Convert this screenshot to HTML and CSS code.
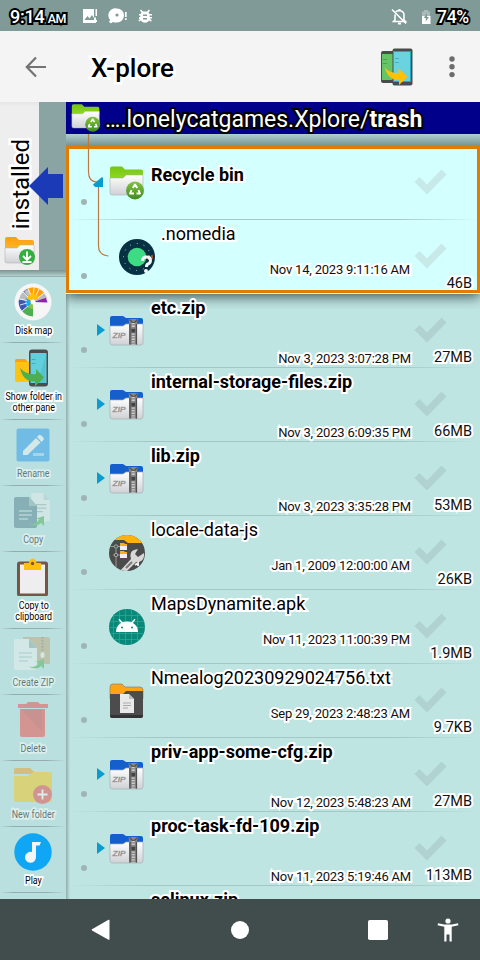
FILE: index.html
```html
<!DOCTYPE html>
<html lang="en">
<head>
<meta charset="utf-8">
<title>X-plore</title>
<link rel="stylesheet" href="styles.css">
</head>
<body>
<svg width="0" height="0" class="defs">
  <defs>
    <linearGradient id="silver" x1="0" y1="0" x2="0" y2="1"><stop offset="0" stop-color="#fff"/><stop offset="1" stop-color="#cfd1d5"/></linearGradient>
    <linearGradient id="lime" x1="0" y1="0" x2="0" y2="1"><stop offset="0" stop-color="#76c410"/><stop offset="1" stop-color="#8fdc28"/></linearGradient>
    <linearGradient id="amber" x1="0" y1="0" x2="0" y2="1"><stop offset="0" stop-color="#ff9d0a"/><stop offset="1" stop-color="#ffb92e"/></linearGradient>
    <linearGradient id="ball" x1="0" y1="0" x2="0" y2="1"><stop offset="0" stop-color="#83c340"/><stop offset="1" stop-color="#3f8a22"/></linearGradient>
    <clipPath id="disc"><circle cx="18" cy="18" r="18"/></clipPath>
  </defs>
  <symbol id="check" viewBox="0 0 33 26"><path d="M.5 13 5.500 8l7.500 7.500L27.500.5l5 5L13 25.500z"/></symbol>
  <symbol id="recycle" viewBox="0 0 36 36">
    <path d="M1 3.500q0-2 2-2h10l3 3h16q2 0 2 2v8H1z" fill="url(#lime)"/>
    <path d="M1 13h13l3-3h17v18q0 2-2 2H3q-2 0-2-2z" fill="url(#silver)" stroke="#9ba5a5" stroke-width=".5"/>
    <circle cx="26" cy="25.500" r="9" fill="url(#ball)"/>
    <path d="m23.800 23 2.200-3.500 2.300 3.500M29.500 25l1.500 3.500h-3.500M25 28.500h-4l1.500-3.500" fill="none" stroke="#fff" stroke-width="1.900" stroke-linejoin="round"/>
  </symbol>
  <symbol id="download" viewBox="0 0 32 32">
    <path d="M1 4q0-2 2-2h9l3 3h13q2 0 2 2v8H1z" fill="url(#amber)"/>
    <path d="M1 13h12l3-3h14v16q0 2-2 2H3q-2 0-2-2z" fill="url(#silver)" stroke="#aaa" stroke-width=".5"/>
    <circle cx="23" cy="22" r="8" fill="#36ae3e"/>
    <path d="M23 16.500v8m-4-3.500 4 4 4-4M18.500 27h9" fill="none" stroke="#fff" stroke-width="1.800"/>
  </symbol>
  <symbol id="zip" viewBox="0 0 36 36">
    <path d="M1 5q0-2 2-2h11l3 2h15q2 0 2 2v10H1z" fill="#145fcb"/>
    <path d="M1 13h13l3-2h17v18q0 3-2 3H3q-2 0-2-3z" fill="url(#silver)" stroke="#a5b0b5" stroke-width=".7"/>
    <path d="M19.500 6h10L28 9v22.500h-8V9z" fill="#868686"/>
    <path d="M20.500 6.500l4 4 4-4M21 11v20.500M27.500 11v20.500" stroke="#505050" fill="none" stroke-width="1.200"/>
    <path d="M24.300 10v21.500" stroke="#ccc" stroke-width="3" stroke-dasharray="1.300 1.300"/>
    <path d="M22.300 15.500h4v4h-4z" fill="#444"/>
    <text x="3.500" y="25" font-size="7.500" font-style="italic" textLength="13" lengthAdjust="spacingAndGlyphs" fill="#808080" stroke="#999" stroke-width=".3">ZIP</text>
  </symbol>
  <symbol id="phone" viewBox="0 0 20 38">
    <rect x=".5" y=".5" width="19" height="37" rx="3" fill="#4a4e50"/><path d="M2 4h16v30H2z" fill="#62d0dc"/><path d="M17 7v27H9z" fill="#54c3d0"/><path d="M4 10v1m2-1v1m-2 3v1m2-1v1" stroke="#429fae" stroke-width="1.500"/>
  </symbol>
  <symbol id="docs" viewBox="0 0 38 36">
    <path d="M17 2q0-2 2-2h12l7 8v22q0 2-2 2H19q-2 0-2-2z" fill="#e8eeee"/><path d="M31 0v8h7z" fill="#b7cccb"/>
    <path d="M22 13h12m-12 4h12m-12 4h8" stroke="#9caead" stroke-width="1.400"/>
  </symbol>
  <symbol id="sheet" viewBox="0 0 24 32">
    <path d="M0 2q0-2 2-2h13l8 9v20q0 2-2 2H2q-2 0-2-2z"/><path d="M15 0v9h8z" fill="#8ea9ae"/>
    <path d="M5 14h13M5 18h13M5 22h9" stroke="#b5c9cc" stroke-width="1.400"/>
  </symbol>
</svg>

<header class="status">
  <span class="clock">9:14<small>AM</small></span>
  <svg class="notes" width="72" height="16" viewBox="0 0 72 16" fill="#fff">
    <path d="M1 1h11v8.500h2V15H1z"/><path d="m2.500 12 3-4 2 2.500L10 7l2 3v2z" fill="#809a98"/><path d="M13.500 1h1.500v7h-1.500zM13 12h2v2h-2z"/>
    <path d="M35 .5a7 7 0 0 1 0 14c-2 0-3 0-4-.6A7 7 0 0 1 35 .5z"/><circle cx="35" cy="7" r="1.600" fill="#809a98"/><circle cx="29" cy="13.500" r="1.700"/><path d="M43 4h1.700v5H43zm0 6.200h1.700V12H43z"/>
    <path d="M59.500 4.500 58 2.500 59 1.500l2 2h4l2-2 1 1-1.500 2 1 1.500H70v1.500h-2.300V9H70v1.500h-2.300L70 13l-1.500.5-1.500-1q-1.300 2.300-4 2.300t-4-2.300l-2 1-.5-1.500 2-1H57V9h1.300V7.500H57V6h1.500z"/><path d="M61 6.500h4V8h-4zm0 3.500h4v1.500h-4z" fill="#809a98"/>
  </svg>
  <svg class="bell" width="18" height="18" viewBox="0 0 18 18" fill="none" stroke="#fff" stroke-width="1.600"><path d="M5 6.500V12L3.500 13.500h12L14 12V7q0-3.500-3.500-4.300H8Q6.500 3 6 4M2 1.500l14 14"/><path d="M8 15.500h3M9.500 1v2" stroke-width="2.200"/></svg>
  <svg class="battery" width="10" height="16" viewBox="0 0 10 16"><path d="M3 1h4v1.500h2V7H1V2.500h2z" fill="#a9bab8"/><path d="M1 7h8.500v8H1z" fill="#fff"/><path d="M6 4 2.800 9h2v3.500L8 8H6z" fill="#809a98"/></svg>
  <span class="percent">74%</span>
</header>

<div class="toolbar">
  <svg class="back" width="22" height="22" viewBox="0 0 22 22" fill="none" stroke="#737373" stroke-width="2.200"><path d="M21 11H2.500M11 1.500 1.800 11l9.200 9.500"/></svg>
  <h1>X-plore</h1>
  <svg class="panes" width="34" height="38" viewBox="0 0 34 38">
    <rect x="1" y="3" width="20" height="32" rx="2" fill="#484c4c"/><path d="M2 6h14v26H2z" fill="#65c466"/><path d="M4 11v1m2-1v1m-2 3v1m2-1v1" stroke="#439247" stroke-width="1.400"/>
    <rect x="12.500" y=".5" width="20" height="37" rx="2" fill="#484c50"/><path d="M13.500 3.500h17v30h-17z" fill="#6bd3df" stroke="#22a5c1"/><path d="M16 10v1m2-1v1m-2 3v1m2-1v1" stroke="#439fae" stroke-width="1.400"/>
    <path d="M4.500 19q4 6 14 6v-4.500l9 8-8.500 8.500v-5Q8 32 4.500 19z" fill="#ffc107"/>
  </svg>
  <svg class="more" width="6" height="22" viewBox="0 0 6 22" fill="#6c6c6c"><circle cx="3" cy="3" r="2.700"/><circle cx="3" cy="10.800" r="2.700"/><circle cx="3" cy="18.600" r="2.700"/></svg>
</div>

<div class="content">
  <aside class="side">
    <div class="pane-tab">
      <div class="tab"><span class="vertical">installed</span><svg width="32" height="32"><use href="#download"/></svg></div>
      <svg class="arrow" width="35" height="38" viewBox="0 0 35 38"><path d="M0 19 19 0v7h15v24H19v7z" fill="#1b3ab8"/></svg>
    </div>
    <div class="side-shade"></div>
    <div class="tool">
      <svg width="38" height="38" viewBox="0 0 38 38"><circle cx="19" cy="19" r="18.500" fill="#f6f6f6"/>
        <path d="M19 19v14.500A14.500 14.500 0 0 1 8 28z" fill="#4caf50"/>
        <path d="M19 19 8 28a14 14 0 0 1-3-12z" fill="#3e55b5"/>
        <path d="M19 19 5 16a14 14 0 0 1 4-7z" fill="#b9bdc0"/>
        <path d="M19 19 9 9a14 14 0 0 1 5-3.500z" fill="#3e55b5"/>
        <path d="M19 19 10 9a14 14 0 0 1 9-4.500z" fill="#c0c0c0"/>
        <path d="M19 19 14 5.500A14 14 0 0 1 25 5.800z" fill="#ffa000"/>
        <path d="m19 19 6-13.200a14 14 0 0 1 5 4z" fill="#ff9d13"/>
        <path d="m19 19 11-9.200 3 5z" fill="#b9bdc0"/>
        <path d="m19 19 13-4.200 1.500 4.700z" fill="#8e24aa"/>
        <path d="M19 19v7a7 7 0 0 1-6-3z" fill="#8bc34a"/>
        <path d="m19 19-6 5a8 8 0 0 1-1-9z" fill="#22a7f0"/>
        <path d="m19 19-7-4 4-4.500L18 10l7 3z" fill="#ffc107"/>
        <path d="M5 16l8 1.500M6 22l7-2M8 28l6-5M9 9l5 5m0-8.500 2.500 6M20 4.500l-.5 6M25 6l-2.500 5.500M30 10l-6 5" stroke="#fff" stroke-width=".8"/><circle cx="19" cy="19" r="2.500" fill="#fff"/>
      </svg><span>Disk map</span></div>
    <div class="tool tall">
      <svg width="38" height="38" viewBox="0 0 38 38"><path d="M1 12q0-2 2-2h8l3 3h4v20H3q-2 0-2-2z" fill="#ffc20e"/><path d="M1 12q0-2 2-2h8l3 3H1z" fill="#f9a014"/><use href="#phone" x="14.500" y="0" width="20" height="38"/><path d="M6 19q6 7 16 6v-5l8 8.500-9 9v-5Q9 33 6 19z" fill="#4caf50"/></svg>
      <span>Show folder in<br>other pane</span></div>
    <div class="tool off">
      <svg width="38" height="38" viewBox="0 0 38 38"><rect x="2.500" y="2.500" width="33" height="33" rx="2" fill="#2597ec"/><path d="m9 25 13-13 4.500 4.500L13.500 29H9zM23 11l2-2q1-.7 2 .3l2.500 2.500q1 1 0 2L27.500 16z" fill="#f1f1f1"/><path d="M19 28.500h11" stroke="#8fcaf7" stroke-width="3"/></svg><span>Rename</span></div>
    <div class="tool off">
      <svg width="38" height="38" viewBox="0 0 38 38"><use href="#docs" x="0" y="1" width="38" height="32"/><use href="#sheet" x="0" y="5" width="24" height="32" fill="#4f7c8b"/><path d="M14 31q8 3 11-4h-4l9-3v10l-3-3q-5 5-13 0z" fill="#4caf50"/></svg><span>Copy</span></div>
    <div class="tool tall">
      <svg width="38" height="38" viewBox="0 0 38 38"><rect x="4.500" y="5" width="28" height="32" rx="1" fill="#eee" stroke="#795548" stroke-width="3"/><path d="M10 5h5q0-4 4-4.500Q22 1 22.500 5H27v7H10z" fill="#ffc107"/><circle cx="18.500" cy="5.500" r="1.700" fill="#795548"/></svg><span>Copy to<br>clipboard</span></div>
    <div class="tool off">
      <svg width="38" height="38" viewBox="0 0 38 38"><path d="M9 2h24q3 0 3 3v24H9z" fill="#c0a274"/><path d="M28.500 2v17" stroke="#8b7860" stroke-width="2" stroke-dasharray="1.500 1.500"/><rect x="26.500" y="17" width="4" height="6" rx="2" fill="#eee"/><use href="#sheet" x="0" y="4" width="24" height="32" fill="#eef2f2"/><path d="M14 31q8 3 11-4h-4l9-3v10l-3-3q-5 5-13 0z" fill="#4caf50"/></svg><span>Create ZIP</span></div>
    <div class="tool off">
      <svg width="38" height="38" viewBox="0 0 38 38"><path d="M4 3h8l2-2h10l2 2h8v4H4zM6 8h25v26q0 2-2 2H8q-2 0-2-2z" fill="#f04540"/><path d="m8 9 20 22V9z" fill="#d83e3a"/></svg><span>Delete</span></div>
    <div class="tool off">
      <svg width="38" height="38" viewBox="0 0 38 38"><path d="M0 3q0-2 2-2h14l6 6H0z" fill="#e99c16"/><path d="M0 9h14l5-4h17q2 0 2 2v26q0 2-2 2H2q-2 0-2-2z" fill="#fbc312"/><circle cx="28.500" cy="27.500" r="9.500" fill="#ef4340"/><path d="M28.500 22.500v10m-5-5h10" stroke="#fff" stroke-width="1.800"/></svg><span>New folder</span></div>
    <div class="tool">
      <svg width="38" height="38" viewBox="0 0 38 38"><circle cx="19" cy="19" r="18.700" fill="#0fa7f5"/><path d="M18 9h9l-1.500 3.500H22V24a5.500 5.500 0 1 1-4-5z" fill="#f3f6f8"/></svg><span>Play</span></div>
  </aside>

  <main class="files">
    <div class="path"><svg width="30" height="30"><use href="#recycle"/></svg><span>….lonelycatgames.Xplore/<b>trash</b></span></div>
    <div class="path-shade"></div>
    <section class="selected">
      <div class="row lead"><i></i><svg class="icon" width="36" height="36"><use href="#recycle"/></svg><b class="name">Recycle bin</b><svg class="check"><use href="#check"/></svg></div>
      <div class="row child"><i></i><svg class="icon" width="36" height="36" viewBox="0 0 36 36"><circle cx="18" cy="18" r="18" fill="#073042"/><circle cx="18" cy="18" r="13.500" fill="none" stroke="#b4d2d8" stroke-width="1" stroke-dasharray="1 6"/><circle cx="18" cy="18" r="9.300" fill="#3ddc84"/><path d="M30 16v5m3-5v4" stroke="#e9572c" stroke-width="1.400"/><path d="M23.500 22q0-4 4-4t4 3.500q0 2.500-2.500 3.500-1.500.5-1.500 3" fill="none" stroke="#f5f5f5" stroke-width="3"/><circle cx="27" cy="32" r="2" fill="#f5f5f5"/></svg><span class="name">.nomedia</span><svg class="check"><use href="#check"/></svg><time class="high">Nov 14, 2023 9:11:16 AM</time><span class="size">46B</span></div>
    </section>
    <svg class="branches" width="45" height="130" viewBox="0 0 45 130" fill="none" stroke="#b97a45" stroke-width="1.200"><path d="M22.500 0v38q0 10 9 10M32.500 52v60q0 9 10 10"/><path d="m36 43-9 7.500 2 2.500h8V44z" fill="#0a9bd0" stroke="none"/></svg>
    <div class="row"><i></i><u></u><svg class="icon" width="36" height="36"><use href="#zip"/></svg><b class="name">etc.zip</b><svg class="check"><use href="#check"/></svg><time>Nov 3, 2023 3:07:28 PM</time><span class="size">27MB</span></div>
    <div class="row"><i></i><u></u><svg class="icon" width="36" height="36"><use href="#zip"/></svg><b class="name">internal-storage-files.zip</b><svg class="check"><use href="#check"/></svg><time>Nov 3, 2023 6:09:35 PM</time><span class="size">66MB</span></div>
    <div class="row"><i></i><u></u><svg class="icon" width="36" height="36"><use href="#zip"/></svg><b class="name">lib.zip</b><svg class="check"><use href="#check"/></svg><time>Nov 3, 2023 3:35:28 PM</time><span class="size">53MB</span></div>
    <div class="row"><i></i><svg class="icon" width="36" height="36" viewBox="0 0 36 36"><g clip-path="url(#disc)"><path d="M0 0h36v36H0z" fill="#4b4b4b"/><path d="M0 0h36v8H19l-4-3H0z" fill="#ffb20d"/><path d="M0 11.500h11M7 14v18M4 20h7" stroke="#999" fill="none"/><circle cx="7" cy="11.500" r="1.700" fill="#4b4b4b" stroke="#aaa"/><circle cx="7" cy="20" r="1.700" fill="#4b4b4b" stroke="#aaa"/><path d="M11 9h7v6h-7zm0 8h7v6h-7z" fill="#eee"/><path d="M11 8h4l1 1h2v2h-7zm0 8h4l1 1h2v2h-7z" fill="#ffad16"/><path d="m11 36 11-12q-2-7 3-9l4-1-3 5 3 3 6-4q1 7-5 9l-3 0-9 9z" fill="#d8d8d8"/><path d="m17 33 6-6" stroke="#777" stroke-width="2"/><path d="m26 30 3-2v3" stroke="#eee" stroke-width="2" fill="none"/></g></svg><span class="name">locale-data-js</span><svg class="check"><use href="#check"/></svg><time class="high">Jan 1, 2009 12:00:00 AM</time><span class="size">26KB</span></div>
    <div class="row"><i></i><svg class="icon" width="36" height="36" viewBox="0 0 36 36"><g clip-path="url(#disc)"><path d="M0 0h36v36H0z" fill="#07897a"/><path d="M4.500 0v36m6-36v36m6-36v36m6-36v36m6-36v36M0 6.500h36m-36 6h36m-36 6h36m-36 6h36m-36 6h36" stroke="#399f92" stroke-width=".8"/></g><path d="M7 23q0-6 5-9l-2.500-3.500 1-.8 3 3.600q4.500-1.600 9 0l3-3.600 1 .8L24 14q5 3 5 9z" fill="#fff"/><circle cx="13" cy="18.500" r="1" fill="#07897a"/><circle cx="23" cy="18.500" r="1" fill="#07897a"/></svg><span class="name">MapsDynamite.apk</span><svg class="check"><use href="#check"/></svg><time class="high">Nov 11, 2023 11:00:39 PM</time><span class="size">1.9MB</span></div>
    <div class="row"><i></i><svg class="icon" width="36" height="36" viewBox="0 0 36 36"><path d="M1 4q0-3 3-3h9l3 3h15q3 0 3 3v9H1z" fill="#ffa514" stroke="#7d7360" stroke-width=".6"/><path d="M1 11h13l3-3h17v24q0 3-3 3H4q-3 0-3-3z" fill="#4c4c4c"/><path d="M1 32h33v1q0 2-2 2H3q-2 0-2-2z" fill="#333"/><path d="M11 11h9l5 5v14H11z" fill="#e9e9e9"/><path d="M20 11v5h5z" fill="#bbb"/><path d="M14 20h8m-8 2.500h8M14 25h5" stroke="#aaa"/></svg><span class="name">Nmealog20230929024756.txt</span><svg class="check"><use href="#check"/></svg><time class="high">Sep 29, 2023 2:48:23 AM</time><span class="size">9.7KB</span></div>
    <div class="row"><i></i><u></u><svg class="icon" width="36" height="36"><use href="#zip"/></svg><b class="name">priv-app-some-cfg.zip</b><svg class="check"><use href="#check"/></svg><time>Nov 12, 2023 5:48:23 AM</time><span class="size">27MB</span></div>
    <div class="row"><i></i><u></u><svg class="icon" width="36" height="36"><use href="#zip"/></svg><b class="name">proc-task-fd-109.zip</b><svg class="check"><use href="#check"/></svg><time>Nov 11, 2023 5:19:46 AM</time><span class="size">113MB</span></div>
    <div class="row last"><b class="name">selinux.zip</b></div>
  </main>
</div>

<nav class="navbar">
  <svg width="20" height="22" viewBox="0 0 20 22"><path d="M1 10.300 17.500.8q1-.5 1 .7v18.500q0 1.200-1 .7L1 11.500q-.8-.6 0-1.200z" fill="#fff"/></svg>
  <svg width="18" height="18" viewBox="0 0 18 18"><circle cx="9" cy="9" r="9" fill="#fff"/></svg>
  <svg width="20" height="20" viewBox="0 0 20 20"><rect width="20" height="20" rx="1.800" fill="#fff"/></svg>
  <svg width="22" height="24" viewBox="0 0 22 24" fill="#fff"><circle cx="11" cy="3" r="2.600"/><path d="m1 5.300 6 1.200h8l6-1.200.4 2-6.700 1.500V23.500h-2.200v-7h-3v7H7.300V8.800L.6 7.300z"/></svg>
</nav>
</body>
</html>
```
FILE: styles.css
```css
* { box-sizing: border-box; }
body {
  margin: 0;
  width: 480px;
  height: 960px;
  overflow: hidden;
  display: flex;
  flex-direction: column;
  font-family: Roboto, "Liberation Sans", sans-serif;
  color: #000;
  background: #bfe5e3;
}
svg { display: block; flex: none; }
.defs { position: absolute; }

.status {
  height: 31px;
  flex: none;
  display: flex;
  align-items: center;
  padding: 2px 9px 0 10px;
  background: #809a98;
  color: #fff;
}
.clock, .percent, .path span {
  -webkit-text-stroke: 4px #000;
  paint-order: stroke fill;
  stroke-linejoin: round;
}
.clock { width: 58px; font-size: 18px; font-weight: 500; white-space: nowrap; letter-spacing: -.2px; }
.clock small { font-size: 12.500px; margin-left: 3px; letter-spacing: -.4px; }
.notes { margin-left: 14px; margin-top: -1px; }
.bell { margin-left: auto; }
.battery { margin-left: 13px; }
.percent { margin-left: 6px; width: 34px; font-size: 17.500px; font-weight: 500; letter-spacing: -.3px; }

.toolbar {
  height: 71px;
  flex: none;
  display: flex;
  align-items: center;
  padding: 0 25px 0 25px;
  background: #f4f4f4;
}
.toolbar h1 {
  margin: 2px auto 0 44px;
  font-size: 26px;
  font-weight: 500;
  -webkit-text-stroke: 5px #fff;
  paint-order: stroke fill;
}
.more { margin-left: 35px; }

.content { flex: 1; min-height: 0; display: flex; overflow: hidden; }
.side { width: 66px; flex: none; background: #b9e0de; }
.pane-tab { height: 168px; background: #8aa3a3; display: flex; }
.tab {
  width: 39px;
  flex: none;
  background: linear-gradient(#e6e6e6, #eee 5px);
  display: flex;
  flex-direction: column;
  align-items: center;
  justify-content: flex-end;
  padding-bottom: 3px;
}
.vertical {
  writing-mode: vertical-rl;
  transform: rotate(180deg);
  font-size: 24px;
  line-height: 28px;
  margin: 0 0 6px 3px;
  -webkit-text-stroke: 5px #fff;
  paint-order: stroke fill;
}
.arrow { margin: 65px 0 0 -10px; position: relative; }
.side-shade { height: 7px; background: linear-gradient(#7d9291, #b0d0ce); border-bottom: 1px solid #98b0af; }
.tool {
  height: 66px;
  padding-top: 6px;
  display: flex;
  flex-direction: column;
  align-items: center;
  background: linear-gradient(90deg, transparent, #94adac 20%, #94adac 70%, transparent) bottom / 100% 1px no-repeat;
}
.tool.tall { height: 77px; }
.tool span {
  margin: 4px 0 0 1px;
  font-size: 10px;
  line-height: 11px;
  text-align: center;
  white-space: nowrap;
  transform: scaleX(.89);
  -webkit-text-stroke: 3.500px #fff;
  paint-order: stroke fill;
}
.tool.off > * { opacity: .48; }

.files {
  width: 414px;
  flex: none;
  position: relative;
  background: linear-gradient(90deg, #91aead, #bfe5e3 4px);
}
.path {
  height: 32px;
  background: #00008b;
  color: #fff;
  display: flex;
  align-items: center;
  padding-left: 5px;
  font-size: 23px;
  white-space: nowrap;
}
.path svg { margin-right: 4px; }
.path span { margin-top: 2px; }
.path b { font-weight: 700; }
.path-shade { height: 12px; background: linear-gradient(#add1cf, #78908f); }
.selected {
  height: 148px;
  position: relative;
  background: #d3ffff;
  box-shadow: 0 3px 12px #3f5757;
  clip-path: inset(0 0 -15px 0);
}
.selected::after { content: ""; position: absolute; inset: 0 0 1px; border: 3px solid #e07c00; }
.branches { position: absolute; left: 0; top: 32px; z-index: 2; }

.row {
  height: 74px;
  display: grid;
  grid-template-columns: 85px 196px 65px 60px;
  grid-template-rows: 74px;
  background: linear-gradient(90deg, transparent, #a5c6c6 20%, #a5c6c6 80%, transparent) bottom / 100% 1px no-repeat;
}
.row > * { grid-row: 1; }
.selected .child { background: none; }
.row i { grid-column: 1; width: 6px; height: 6px; border-radius: 50%; background: #9fb5b4; margin: 53px 0 0 15px; }
.row u { grid-column: 1; border-left: 8px solid #0a9bd0; border-top: 6px solid transparent; border-bottom: 6px solid transparent; width: 0; height: 12px; margin: 30px 0 0 31px; }
.icon { grid-column: 1; margin: 19px 0 0 43px; }
.name {
  grid-column: 2 / 5;
  font-size: 18px;
  line-height: 24px;
  margin-top: 2px;
  white-space: nowrap;
}
.name, time, .size { -webkit-text-stroke: 4px #fff; paint-order: stroke fill; z-index: 3; }
b.name { font-weight: 700; }
.lead .name { margin-top: 17px; }
.child .icon { margin-left: 53px; }
.child .name { margin-left: 10px; }
.check { grid-column: 3 / 5; width: 33px; height: 26px; fill: #b0d3d2; margin: 23px 0 0 67px; }
.selected .check { fill: #c7eae9; }
time, .size { white-space: nowrap; text-align: right; }
time { grid-column: 2 / 4; font-size: 13px; line-height: 16px; letter-spacing: -.2px; margin-top: 57px; margin-right: 1px; color: #111; }
time.high { margin-top: 42px; margin-right: 2px; }
.size { grid-column: 3 / 5; font-size: 14.500px; line-height: 16px; margin-top: 56px; color: #111; }

.navbar {
  height: 61px;
  flex: none;
  position: relative;
  z-index: 4;
  background: #404d4c;
  display: flex;
  align-items: center;
  padding-left: 91px;
}
.navbar svg:nth-child(2) { margin-left: 120px; }
.navbar svg:nth-child(3) { margin-left: 119px; }
.navbar svg:nth-child(4) { margin-left: 49px; }
```
